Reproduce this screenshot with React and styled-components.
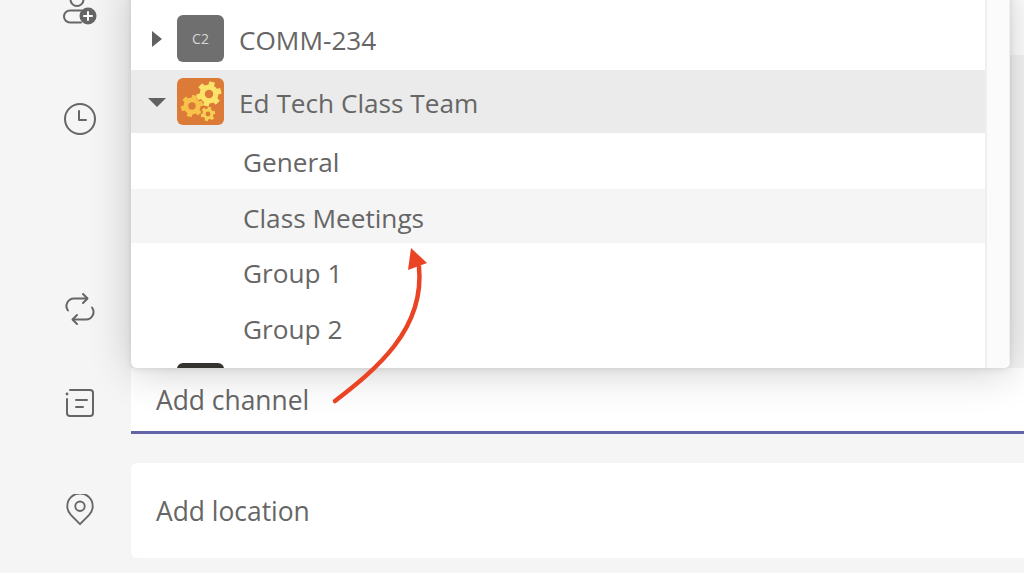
import React from "react";
import styled, { createGlobalStyle } from "styled-components";

const Global = createGlobalStyle`
  html, body { margin: 0; padding: 0; background: #f5f5f5; }
  body { font-family: "Open Sans", "Noto Sans", sans-serif; }
`;

const Page = styled.div`
  position: relative;
  width: 1024px;
  height: 573px;
  overflow: hidden;
  background: #f5f5f5;
  display: grid;
  grid-template-columns: 131px 1fr;
  grid-template-rows: 55px 313px 66px 29px 95px;
`;

const IconCell = styled.div`
  grid-column: 1;
  display: flex;
  flex-direction: column;
  align-items: center;
  color: #666;
  padding-left: 29px;
  width: 102px;
`;

const TopIconCell = styled(IconCell)`
  grid-row: 1;
`;

const MiddleIcons = styled(IconCell)`
  grid-row: 2 / span 2;
  padding-top: ${(p) => p.$top}px;
`;

const Spacer = styled.div`
  height: ${(p) => p.$h}px;
  flex: none;
`;

const LocationIcon = styled(IconCell)`
  grid-row: 5;
  justify-content: center;
  padding-bottom: 2px;
`;

const TopField = styled.div`
  grid-column: 2;
  grid-row: 1;
  background: #fff;
`;

const ChannelField = styled.div`
  grid-column: 2;
  grid-row: 3;
  background: #fff;
  border-bottom: 3px solid #6264a7;
  display: flex;
  align-items: center;
  padding: 0 0 0 25px;
  font-size: 26.4px;
  font-weight: 400;
  color: #666;
`;

const LocationField = styled.div`
  grid-column: 2;
  grid-row: 5;
  background: #fff;
  border-radius: 6px 0 0 6px;
  display: flex;
  align-items: center;
  padding: 0 0 0 25px;
  font-size: 26.4px;
  color: #666;
`;

const Menu = styled.div`
  position: absolute;
  left: 131px;
  top: -20px;
  width: 879px;
  height: 388px;
  background: #fff;
  border-radius: 0 0 6px 6px;
  box-shadow: 0 3px 44px rgba(0, 0, 0, 0.2), 0 1px 6px rgba(0, 0, 0, 0.1);
  display: grid;
  grid-template-columns: 1fr 25px;
  overflow: hidden;
`;

const MenuList = styled.div`
  padding-top: 27px;
  overflow: hidden;
`;

const Scrollbar = styled.div`
  background: #fbfbfb;
  border-left: 2px solid #efefef;
  border-right: 1px solid #f0f0f0;
`;

const TeamRow = styled.div`
  height: 63px;
  display: flex;
  align-items: center;
  background: ${(p) => (p.$selected ? "#ebebeb" : "transparent")};
  color: #666;
  font-size: 26.2px;
`;

const TeamName = styled.span`
  margin-left: -1px;
  padding-top: 2px;
`;

const ChannelRow = styled.div`
  height: ${(p) => p.$h}px;
  display: flex;
  align-items: center;
  padding: ${(p) => p.$shift}px 0 0 112px;
  box-sizing: border-box;
  background: ${(p) => (p.$hover ? "#f5f5f5" : "transparent")};
  color: #666;
  font-size: 26.2px;
`;

const Caret = styled.svg`
  width: 20px;
  height: 20px;
  flex: none;
  margin-left: 16px;
  fill: #616161;
`;

const Avatar = styled.div`
  width: 47px;
  height: 47px;
  flex: none;
  margin-left: 10px;
  margin-right: 16px;
  border-radius: 6px;
  background: ${(p) => p.$bg};
  color: #d6d6d6;
  font-size: 14px;
  display: flex;
  align-items: center;
  justify-content: center;
`;

const PeekAvatar = styled.div`
  width: 47px;
  height: 10px;
  margin-left: 46px;
  margin-top: 10px;
  border-radius: 6px 6px 0 0;
  background: #33322e;
`;

const Arrow = styled.svg`
  position: absolute;
  left: 325px;
  top: 240px;
  width: 115px;
  height: 175px;
  pointer-events: none;
`;

const Line = ({ children, size = 34 }) => (
  <svg width={size} height={size} viewBox="0 0 34 34" fill="none" stroke="currentColor" strokeWidth="2" strokeLinecap="round" strokeLinejoin="round">
    {children}
  </svg>
);

const Gear = ({ cx, cy, r, color }) => {
  const teeth = [0, 60, 120, 180, 240, 300];
  return (
    <g transform={`translate(${cx} ${cy})`}>
      {teeth.map((a) => (
        <rect key={a} x={-r * 0.3} y={-r * 1.3} width={r * 0.6} height={r * 0.6} fill={color} transform={`rotate(${a + 15})`} />
      ))}
      <circle r={r * 0.72} fill="none" stroke={color} strokeWidth={r * 0.55} />
    </g>
  );
};

const GearIcon = () => (
  <svg width="47" height="47" viewBox="0 0 47 47">
    <Gear cx={32} cy={16} r={9.5} color="#fbe36a" />
    <Gear cx={15} cy={28} r={8.5} color="#f8c24a" />
    <Gear cx={31} cy={36} r={5.5} color="#f8cf55" />
  </svg>
);

export default function App() {
  return (
    <Page>
      <Global />
      <TopIconCell>
        <svg width="36" height="28" viewBox="0 0 36 28" fill="none">
          <circle cx="15" cy="-0.500" r="6.500" stroke="#666" strokeWidth="2" />
          <path d="M19 22.500H8a6 6 0 0 1 0-12h12" stroke="#666" strokeWidth="2" strokeLinecap="round" />
          <circle cx="26" cy="16" r="8.500" fill="#666" />
          <path d="M26 12v8M22 16h8" stroke="#fff" strokeWidth="2" strokeLinecap="round" />
        </svg>
      </TopIconCell>
      <MiddleIcons $top={47}>
        <Line>
          <circle cx="17" cy="17" r="15" />
          <path d="M16 9v9h7" />
        </Line>
        <Spacer $h={156} />
        <Line>
          <path d="M20 2l4.500 4.500-4.500 4.500" />
          <path d="M24 6.500H11a7.500 7.500 0 0 0-6 12" />
          <path d="M14 32l-4.500-4.500L14 23" />
          <path d="M10 27.500h13a7.500 7.500 0 0 0 6-12" />
        </Line>
        <Spacer $h={60} />
        <Line>
          <circle cx="4" cy="8" r="1.400" fill="currentColor" stroke="none" />
          <path d="M7 4h20a3 3 0 0 1 3 3v20a3 3 0 0 1-3 3H7a3 3 0 0 1-3-3V13" />
          <path d="M13 14h11M13 21h7" />
        </Line>
      </MiddleIcons>
      <LocationIcon>
        <Line size={32}>
          <path d="M17 32l-9.500-9.500a13.500 13.500 0 1 1 19 0z" />
          <circle cx="17" cy="13" r="5" />
        </Line>
      </LocationIcon>
      <TopField />
      <ChannelField>Add channel</ChannelField>
      <LocationField>Add location</LocationField>
      <Menu>
        <MenuList>
          <TeamRow>
            <Caret viewBox="0 0 20 20"><path d="M5 2l10 8-10 8z" /></Caret>
            <Avatar $bg="#6f6f6f">C2</Avatar>
            <TeamName>COMM-234</TeamName>
          </TeamRow>
          <TeamRow $selected>
            <Caret viewBox="0 0 20 20"><path d="M1 6h18l-9 9z" /></Caret>
            <Avatar $bg="#dc7b38"><GearIcon /></Avatar>
            <TeamName>Ed Tech Class Team</TeamName>
          </TeamRow>
          <ChannelRow $h={56} $shift={2}>General</ChannelRow>
          <ChannelRow $h={54} $shift={4} $hover>Class Meetings</ChannelRow>
          <ChannelRow $h={56} $shift={4}>Group 1</ChannelRow>
          <ChannelRow $h={54} $shift={6}>Group 2</ChannelRow>
          <PeekAvatar />
        </MenuList>
        <Scrollbar />
      </Menu>
      <Arrow viewBox="0 0 115 175">
        <path d="M10 161C50 130 100 90 94 27" fill="none" stroke="#ea4424" strokeWidth="4.500" strokeLinecap="round" />
        <path d="M86 8l16 15-19 7z" fill="#ea4424" />
      </Arrow>
    </Page>
  );
}
